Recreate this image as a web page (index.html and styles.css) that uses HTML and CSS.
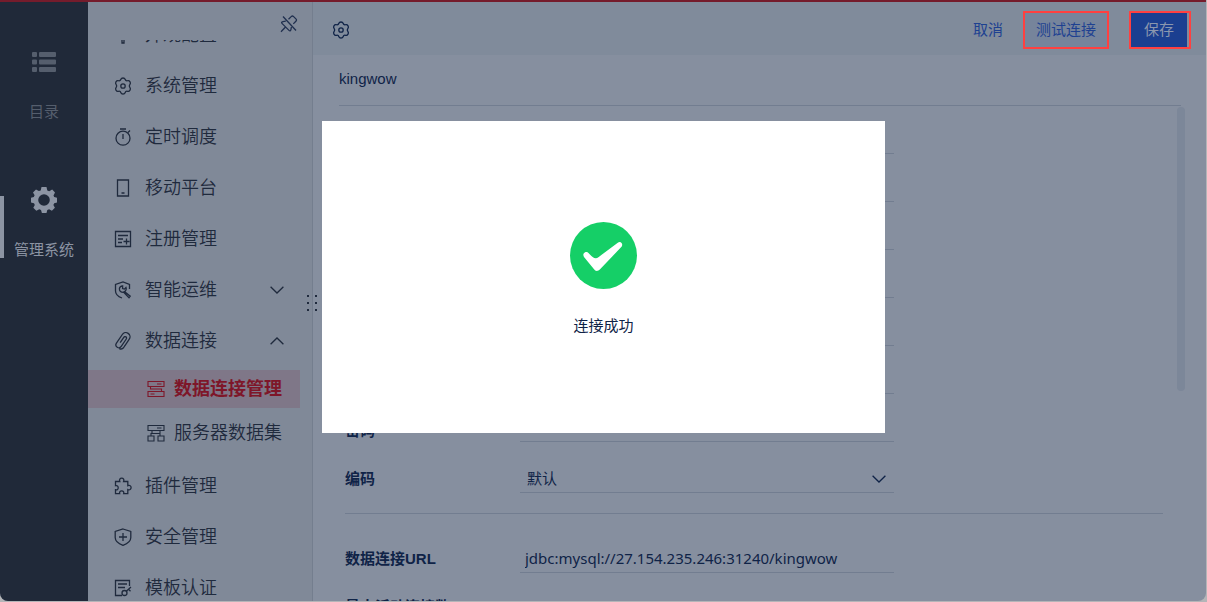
FILE: index.html
```html
<!DOCTYPE html>
<html lang="zh-CN">
<head>
    <meta charset="utf-8">
    <title>数据连接管理</title>
    <link rel="stylesheet" href="styles.css">
</head>
<body>
    <svg class="sprite" aria-hidden="true">
        <symbol id="gear" viewBox="0 0 18 18">
            <path d="M9 1C10 1 10.8 1.4 11.1 2.3 11.5 3.5 12.4 4 13.6 3.7 14.6 3.4 15.3 3.6 15.9 4.6 16.5 5.6 16.9 6.3 16 7.2 15.2 8.2 15.2 9.8 16 10.8 16.9 11.7 16.5 12.4 15.9 13.4 15.3 14.4 14.6 14.6 13.6 14.3 12.4 14 11.5 14.5 11.1 15.7 10.8 16.6 10 17 9 17 8 17 7.2 16.6 6.9 15.7 6.5 14.5 5.6 14 4.4 14.3 3.4 14.6 2.7 14.4 2.1 13.4 1.5 12.4 1.1 11.7 2 10.8 2.8 9.8 2.8 8.2 2 7.2 1.1 6.3 1.5 5.6 2.1 4.6 2.7 3.6 3.4 3.4 4.4 3.7 5.6 4 6.5 3.5 6.9 2.3 7.2 1.4 8 1 9 1z"/>
            <circle cx="9" cy="9" r="2.2"/>
        </symbol>
        <symbol id="chevron" viewBox="0 0 14 8">
            <path d="M.6.8 7 7 13.4.8"/>
        </symbol>
    </svg>

    <div class="app">
        <nav class="rail">
            <a class="rail-item" href="#">
                <svg class="rail-icon" viewBox="0 0 26 26">
                    <rect x="1" y="3" width="5" height="5" rx="1"/><rect x="8" y="3" width="17" height="5" rx="1"/>
                    <rect x="1" y="10.500" width="5" height="5" rx="1"/><rect x="8" y="10.500" width="17" height="5" rx="1"/>
                    <rect x="1" y="18" width="5" height="5" rx="1"/><rect x="8" y="18" width="17" height="5" rx="1"/>
                </svg>
                <span>目录</span>
            </a>
            <a class="rail-item current" href="#">
                <svg class="rail-icon" viewBox="0 0 26 26">
                    <path fill-rule="evenodd" d="M10.500 0h5l.8 3.400 1.900.8L21.200 2.400l2.800 3-1.500 3 .7 1.600L26 10.800v4.600l-2.800.8-.8 1.800 1.500 2.800-3 3-2.800-1.500-1.800.7-.8 3h-4.600l-.9-3-1.700-.7-3 1.500-3-3 1.500-2.800-.8-1.800L0 15.400v-4.600l2.800-.8.8-1.800L2 5.400l3-3L7.900 4l1.800-.6zM13 7.200a5.800 5.800 0 1 0 0 11.600 5.800 5.800 0 0 0 0-11.600z"/>
                </svg>
                <span>管理系统</span>
            </a>
        </nav>

        <aside class="sidebar">
            <div class="sidebar-top">
                <button class="pin" type="button" aria-label="取消固定">
                    <svg class="icon" viewBox="0 0 18 18"><path d="M3 1.500l13 14M5.800 6.200L3 6.600c-1.500.3-1.800 1-.8 2l6.800 6.800c.9.9 1.700.6 1.900-.7l.5-2.700M5.300 12.300L1 16.800M8.500 4.200l2.700-2.600c.8-.8 1.600-.8 2.400 0l2.300 2.300c.8.8.8 1.600 0 2.400l-2.600 2.600"/></svg>
                </button>
            </div>
            <div class="menu-view">
                <ul class="menu">
                    <li><a class="menu-item" href="#">
                        <svg class="icon" viewBox="0 0 18 18"><path d="M2 2h14v9H2zM8 11h2v6H8z"/></svg>
                        <span>外观配置</span></a></li>
                    <li><a class="menu-item" href="#">
                        <svg class="icon"><use href="#gear"/></svg>
                        <span>系统管理</span></a></li>
                    <li><a class="menu-item" href="#">
                        <svg class="icon" viewBox="0 0 18 18"><circle cx="9" cy="10.200" r="7"/><path d="M6 1h6M9 6v5M14 4.500L16 2.500"/></svg>
                        <span>定时调度</span></a></li>
                    <li><a class="menu-item" href="#">
                        <svg class="icon" viewBox="0 0 18 18"><path d="M3.500 1h11v16h-11zM7.500 14h3"/></svg>
                        <span>移动平台</span></a></li>
                    <li><a class="menu-item" href="#">
                        <svg class="icon" viewBox="0 0 18 18"><path d="M1.500 1.500h15v15h-15zM4 5.500h10M4 9h5M4 12.500h4M12.500 8.500v6M9.500 11.500h6"/></svg>
                        <span>注册管理</span></a></li>
                    <li><a class="menu-item" href="#">
                        <svg class="icon" viewBox="0 0 18 18"><path d="M8 17C4 15.500 1.500 13.500 1.500 10V3.500L9 1l6.500 2.500V8"/><path d="M8.600 4.800v2.700l1.800.6 1.600-1.700c.7 1.900-.2 3.700-1.600 4.200l5.800 4.600-1.200 1.600-5.300-5.400C7 11.600 5.200 9.900 5.400 7.600c.2-1.500 1.500-2.700 3.200-2.800z"/></svg>
                        <span>智能运维</span>
                        <svg class="chevron"><use href="#chevron"/></svg></a></li>
                    <li><a class="menu-item" href="#">
                        <svg class="icon" viewBox="0 0 18 18"><path transform="rotate(34 9 9)" d="M13.200 12V4a4.200 4.200 0 0 0-8.400 0v10.500a2.900 2.900 0 0 0 5.800 0V5.500a1.500 1.500 0 0 0-3 0V12M13.200 11.500v2.500a3.500 3.500 0 0 1-3 3.300"/></svg>
                        <span>数据连接</span>
                        <svg class="chevron up"><use href="#chevron"/></svg></a>
                        <ul class="submenu">
                            <li><a class="submenu-item active" href="#">
                                <svg class="icon" viewBox="0 0 18 18"><path d="M1 1.500h16v5H1zM1 11.500h16v5H1zM3.500 6.500v2.500h11v2.500M10 4h4.500M3.500 14h4"/></svg>
                                <span>数据连接管理</span></a></li>
                            <li><a class="submenu-item" href="#">
                                <svg class="icon" viewBox="0 0 18 18"><path d="M1 1.500h16v5H1zM1 12h6v5H1zM11 12h6v5h-6zM5 6.500V9.500h8M4 12V9.500h1M13 6.500V12M10 4h4.500"/></svg>
                                <span>服务器数据集</span></a></li>
                        </ul>
                    </li>
                    <li><a class="menu-item" href="#">
                        <svg class="icon" viewBox="0 0 18 18"><path d="M1.500 4.500h4.300c-.8-2 .2-3.300 1.900-3.300s2.700 1.300 1.900 3.300h4.200v4.200c2-.8 3.300.2 3.300 1.900s-1.300 2.700-3.300 1.900v4.200H9.700c.5-1.800-.4-2.900-2-2.900s-2.500 1.100-2 2.900H1.500v-4c1.800.4 2.700-.5 2.700-2s-.9-2.500-2.700-2z"/></svg>
                        <span>插件管理</span></a></li>
                    <li><a class="menu-item" href="#">
                        <svg class="icon" viewBox="0 0 18 18"><path d="M9 1l7.800 2.500v6c0 3.800-3.500 6.300-7.800 7.800C4.700 15.800 1.200 13.300 1.200 9.500v-6zM9 5v8M5 9h8"/></svg>
                        <span>安全管理</span></a></li>
                    <li><a class="menu-item" href="#">
                        <svg class="icon" viewBox="0 0 18 18"><path d="M8 16.500H1.500v-15h14V7M4 5h9M4 8.500h7"/><circle cx="10.500" cy="14" r="2.500"/><path d="M12.300 12.200L17 8M14.500 10.300l2 2"/></svg>
                        <span>模板认证</span></a></li>
                </ul>
            </div>
            <div class="drag-handle"><i></i><i></i><i></i><i></i><i></i><i></i></div>
        </aside>

        <main class="main">
            <header class="toolbar">
                <svg class="icon"><use href="#gear"/></svg>
                <div class="actions">
                    <button class="btn" type="button">取消</button>
                    <div class="marked"><button class="btn btn-test" type="button">测试连接</button></div>
                    <div class="marked marked-save"><button class="btn btn-save" type="button">保存</button></div>
                </div>
            </header>
            <h1 class="conn-name">kingwow</h1>
            <form class="form">
                <div class="form-row">
                    <label for="driver">驱动器</label>
                    <input class="field" id="driver" type="text">
                </div>
                <div class="form-row">
                    <label for="database">数据库名称</label>
                    <input class="field" id="database" type="text">
                </div>
                <div class="form-row">
                    <label for="host">主机</label>
                    <input class="field" id="host" type="text">
                </div>
                <div class="form-row">
                    <label for="port">端口</label>
                    <input class="field" id="port" type="text">
                </div>
                <div class="form-row">
                    <label for="auth">认证方式</label>
                    <input class="field" id="auth" type="text">
                </div>
                <div class="form-row">
                    <label for="user">用户名</label>
                    <input class="field" id="user" type="text">
                </div>
                <div class="form-row compact">
                    <label for="password">密码</label>
                    <input class="field" id="password" type="password">
                </div>
                <div class="form-row tall">
                    <label for="charset">编码</label>
                    <div class="select">
                        <select class="field" id="charset">
                            <option>默认</option>
                        </select>
                        <svg class="chevron"><use href="#chevron"/></svg>
                    </div>
                </div>
                <hr>
                <div class="form-row">
                    <label for="url">数据连接URL</label>
                    <input class="field" id="url" type="text" value="jdbc:mysql://27.154.235.246:31240/kingwow">
                </div>
                <div class="form-row">
                    <label for="pool">最大活动连接数</label>
                    <input class="field" id="pool" type="text">
                </div>
            </form>
            <div class="scrollbar"></div>
        </main>
    </div>

    <div class="overlay">
        <div class="dialog" role="dialog" aria-labelledby="result">
            <svg class="success" viewBox="0 0 68 68">
                <circle cx="34" cy="34" r="34" fill="#15cf67"/>
                <path d="M14.200 35.500C13 33.500 13.500 31.800 15 30.900c1.500-.8 2.900-.5 4 .7 2.700 2.900 5 5.500 7.500 5.200 1.200-.2 2-.8 3-1.600L48.500 21c1.500-1 3.200-.7 4 .6.900 1.500.5 2.900-.7 4.100L30.500 47.900c-2.400 2.400-4.600 2.300-6.300-.2z" fill="#fff"/>
            </svg>
            <p id="result">连接成功</p>
        </div>
    </div>
</body>
</html>
```
FILE: styles.css
```css
* {
    box-sizing: border-box;
}

body {
    margin: 0;
    background-color: #b4b5b8;
    color: #0f2347;
    font-family: "Liberation Sans", "Noto Sans CJK SC", sans-serif;
    font-size: 15px;
    line-height: 22px;
}

a {
    color: inherit;
    text-decoration: none;
}

ul {
    margin: 0;
    padding: 0;
    list-style: none;
}

button,
input,
select {
    font: inherit;
    color: inherit;
    background: none;
    border: none;
    border-radius: 0;
    outline: none;
    margin: 0;
    padding: 0;
}

.sprite {
    display: none;
}

.icon,
.chevron {
    flex: none;
    width: 18px;
    height: 18px;
    fill: none;
    stroke: currentColor;
    stroke-width: 1.3;
}

.chevron {
    width: 14px;
    height: 8px;
}

.chevron.up {
    transform: rotate(180deg);
}

.app {
    display: flex;
    height: calc(100vh - 1px);
    margin-right: 1px;
    border-top: 2px solid #751c2c;
    border-radius: 0 0 8px 8px;
    overflow: hidden;
    background-color: #868f9f;
}

/* left rail */
.rail {
    flex: none;
    display: flex;
    flex-direction: column;
    gap: 64px;
    width: 88px;
    padding-top: 47px;
    background-color: #202939;
}

.rail-item {
    position: relative;
    display: flex;
    flex-direction: column;
    align-items: center;
    gap: 26px;
    color: #555e6d;
}

.rail-item.current {
    color: #8c94a3;
}

.rail-item.current::before {
    content: "";
    position: absolute;
    left: 0;
    top: 9px;
    width: 4px;
    height: 62px;
    background-color: #8c94a3;
}

.rail-icon {
    width: 26px;
    height: 26px;
    fill: currentColor;
}

/* sidebar */
.sidebar {
    flex: none;
    position: relative;
    display: flex;
    flex-direction: column;
    width: 225px;
    border-right: 1px solid #747e8e;
    background-color: #808998;
    color: #1f2a3d;
}

.sidebar-top {
    flex: none;
    display: flex;
    justify-content: flex-end;
    height: 38px;
    padding: 13px 14px 0 0;
}

.pin {
    height: 18px;
    line-height: 0;
    color: #20304f;
}

.menu-view {
    flex: 1;
    min-height: 0;
    overflow: hidden;
}

/* scrolled a little, so the first entry is cut off */
.menu {
    margin-top: -31px;
    font-size: 18px;
    font-weight: 350;
}

.menu-item {
    display: flex;
    align-items: center;
    gap: 13px;
    height: 51px;
    padding: 0 28px 0 26px;
}

.menu-item .chevron {
    margin-left: auto;
}

.submenu {
    display: flex;
    flex-direction: column;
    gap: 6px;
    padding: 4px 12px 8px 0;
}

.submenu-item {
    display: flex;
    align-items: center;
    gap: 9px;
    height: 38px;
    padding-left: 59px;
}

.submenu-item .icon {
    stroke-width: 1.1;
}

.submenu-item.active {
    background-color: #7f7788;
    color: #7e1629;
    font-weight: bold;
}

.drag-handle {
    position: absolute;
    z-index: 1;
    top: 293px;
    right: -5px;
    display: grid;
    grid-template-columns: 2px 2px;
    gap: 5px 6px;
}

.drag-handle i {
    width: 2px;
    height: 2px;
    background-color: #1f2a3d;
}

/* main */
.main {
    flex: 1;
    position: relative;
    min-width: 0;
    overflow: hidden;
}

.toolbar {
    display: flex;
    align-items: center;
    justify-content: space-between;
    height: 53px;
    padding: 4px 15px 2px 19px;
    background-color: #808b9b;
}

.actions {
    display: flex;
    align-items: center;
    gap: 20px;
    color: #1e4191;
}

.marked {
    border: 2px solid #ff4040;
}

.marked-save {
    padding-right: 2px;
}

.btn {
    display: block;
    height: 34px;
}

.btn-test {
    padding: 0 11px;
    background-color: #76849b;
}

.btn-save {
    padding: 0 13px;
    background-color: #1b3f90;
    color: #8b97ae;
}

.conn-name {
    margin: 0 25px 0 26px;
    padding: 13px 0 15px;
    border-bottom: 1px solid #727d90;
    font-size: 15px;
    font-weight: normal;
    line-height: 22px;
}

.form {
    padding: 0 43px 0 32px;
}

.form-row {
    display: flex;
    align-items: flex-end;
    height: 48px;
}

.form-row label {
    width: 175px;
    font-weight: bold;
    line-height: 28px;
}

.field {
    display: block;
    width: 374px;
    height: 30px;
    padding: 0 5px;
    border-bottom: 1px solid #727d90;
    font-family: "Noto Sans", "Noto Sans CJK SC", sans-serif;
}

.form-row.compact label {
    line-height: 22px;
}

.form-row.compact .field {
    height: 22px;
}

.form-row.tall {
    height: 51px;
}

.select {
    position: relative;
}

.select .field {
    padding: 0 7px;
    appearance: none;
}

.select .chevron {
    position: absolute;
    top: 12px;
    right: 8px;
}

.form hr {
    height: 1px;
    margin: 20px 0 11px;
    border: none;
    background-color: #727d90;
}

.scrollbar {
    position: absolute;
    top: 105px;
    right: 21px;
    width: 8px;
    height: 284px;
    border-radius: 4px;
    background-color: #7c8799;
}

/* connection result */
.overlay {
    position: fixed;
    inset: 0;
    z-index: 2;
    display: flex;
    justify-content: center;
    align-items: flex-start;
    padding-top: 121px;
}

.dialog {
    display: flex;
    flex-direction: column;
    align-items: center;
    gap: 26px;
    width: 563px;
    padding: 101px 0 96px;
    background-color: #fff;
}

.dialog p {
    margin: 0;
}

.success {
    width: 67px;
    height: 67px;
}
```
